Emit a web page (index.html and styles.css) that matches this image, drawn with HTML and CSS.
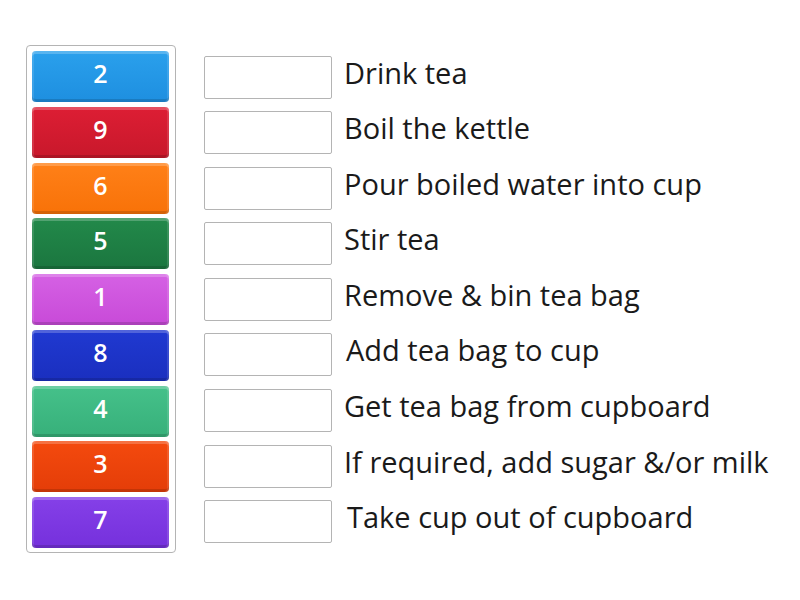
FILE: index.html
```html
<!DOCTYPE html>
<html>
<head>
<meta charset="utf-8">
<link rel="stylesheet" href="styles.css">
</head>
<body>
<div class="page">
  <div class="bank">
    <div class="tile c-blue">2</div>
    <div class="tile c-red">9</div>
    <div class="tile c-orange">6</div>
    <div class="tile c-green">5</div>
    <div class="tile c-pink">1</div>
    <div class="tile c-navy">8</div>
    <div class="tile c-mint">4</div>
    <div class="tile c-vermilion">3</div>
    <div class="tile c-purple">7</div>
  </div>
  <div class="rows">
    <div class="row"><div class="slot"></div><div class="label">Drink tea</div></div>
    <div class="row"><div class="slot"></div><div class="label">Boil the kettle</div></div>
    <div class="row"><div class="slot"></div><div class="label">Pour boiled water into cup</div></div>
    <div class="row"><div class="slot"></div><div class="label">Stir tea</div></div>
    <div class="row"><div class="slot"></div><div class="label">Remove &amp; bin tea bag</div></div>
    <div class="row"><div class="slot"></div><div class="label shift">Add tea bag to cup</div></div>
    <div class="row"><div class="slot"></div><div class="label">Get tea bag from cupboard</div></div>
    <div class="row"><div class="slot"></div><div class="label">If required, add sugar &amp;/or milk</div></div>
    <div class="row"><div class="slot"></div><div class="label shift2">Take cup out of cupboard</div></div>
  </div>
</div>
</body>
</html>
```
FILE: styles.css
```css
html, body {
  margin: 0;
  padding: 0;
  background: #ffffff;
}
body {
  font-family: "Open Sans", "Liberation Sans", sans-serif;
  color: #1a1a1a;
}
.page {
  display: flex;
  align-items: flex-start;
  padding: 45px 0 0 26px;
  gap: 28px;
}
.bank {
  display: flex;
  flex-direction: column;
  gap: 4.75px;
  width: 137px;
  padding: 5px 6px 4px 5px;
  border: 1px solid #b4b4b4;
  border-radius: 4px;
}
.tile {
  height: 51px;
  box-sizing: border-box;
  padding-bottom: 7px;
  border-radius: 4px;
  display: flex;
  align-items: center;
  justify-content: center;
  color: #ffffff;
  font-weight: 600;
  font-size: 25px;
  box-shadow: inset 0 3px 0 rgba(255,255,255,0.22), inset 2px 0 0 rgba(255,255,255,0.12), inset -2px 0 0 rgba(255,255,255,0.12), inset 0 -3px 0 rgba(0,0,0,0.14);
}
.c-blue { background: linear-gradient(#2aa0ec, #1e8fe0); }
.c-red { background: linear-gradient(#dd1e34, #c8182b); }
.c-orange { background: linear-gradient(#ff8018, #f87208); }
.c-green { background: linear-gradient(#22894a, #1b763f); }
.c-pink { background: linear-gradient(#d561e4, #c84ad8); }
.c-navy { background: linear-gradient(#2039d1, #1a2fbf); }
.c-mint { background: linear-gradient(#45c18a, #37b07a); }
.c-vermilion { background: linear-gradient(#f44a0e, #e43d08); }
.c-purple { background: linear-gradient(#8540e8, #7530dc); }
.rows {
  display: flex;
  flex-direction: column;
  gap: 13.6px;
  padding-top: 11px;
}
.row {
  display: flex;
  align-items: center;
  gap: 12px;
  height: 42px;
}
.slot {
  width: 126px;
  height: 41px;
  border: 1px solid #b4b4b4;
  border-radius: 2px;
  flex: none;
}
.label {
  font-size: 29px;
  white-space: nowrap;
  line-height: 1;
  padding-bottom: 10px;
}
.shift { padding-left: 2px; }
.shift2 { padding-left: 3px; }
```
